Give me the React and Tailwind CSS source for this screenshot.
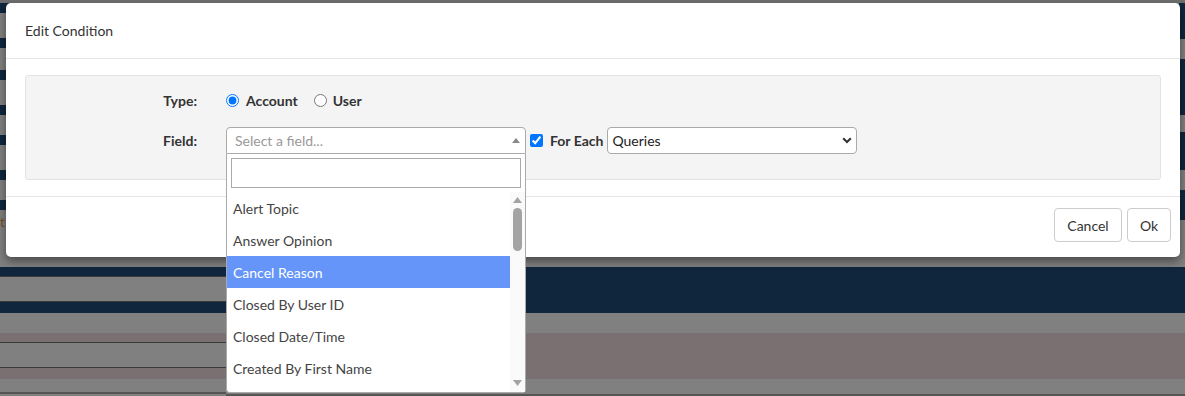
import React from 'react';

const leftTop = [
  ['#0f263d', 10], ['#808080', 25], ['#0f263d', 10], ['#808080', 22], ['#0f263d', 10], ['#808080', 25],
  ['#0f263d', 10], ['#808080', 20], ['#0f263d', 10], ['#808080', 25], ['#0f263d', 10], ['#808080', 20],
  ['#0f263d', 10],
];
const rightTop = [
  ['#0f263d', 36], ['#808080', 20], ['#0f263d', 56], ['#808080', 17], ['#0f263d', 38], ['#808080', 20],
  ['#0f263d', 30], ['#808080', 47],
];

const options = [
  'Alert Topic',
  'Answer Opinion',
  'Cancel Reason',
  'Closed By User ID',
  'Closed Date/Time',
  'Created By First Name',
];

const Stripes = ({ rows }) => (
  <div className="flex flex-col">
    {rows.map(([color, h], i) => (
      <div key={i} style={{ backgroundColor: color, height: h }} />
    ))}
  </div>
);

const FieldDropdown = () => (
  <div className="absolute left-[226px] top-[154px] w-[300px] h-[239px] bg-white border border-t-0 border-[#aaa] rounded-b-[4px] z-20 flex flex-col">
    <div className="px-[4px] pt-[4px] pb-[4px]">
      <div className="h-[30px] border border-[#aaa] bg-white" />
    </div>
    <div className="flex flex-1 overflow-hidden">
      {/* lista de opciones */}
      <div className="flex-1 overflow-hidden">
        {options.map((o, i) => (
          <div
            key={o}
            className={`h-[32px] flex items-center pl-[6px] text-[14px] ${
              i === 2 ? 'bg-[#6595f8] text-white' : 'text-[#444]'
            }`}
          >
            {o}
          </div>
        ))}
      </div>
      {/* barra de desplazamiento */}
      <div className="w-[15px] bg-[#fafafa] flex flex-col items-center">
        <svg width="9" height="6" viewBox="0 0 9 6" className="mt-[5px]">
          <path d="M4.5 0 L9 6 L0 6 Z" fill="#a3a3a3" />
        </svg>
        <div className="w-[9px] h-[43px] rounded-full bg-[#a3a3a3] mt-[5px]" />
        <div className="flex-1" />
        <svg width="9" height="6" viewBox="0 0 9 6" className="mb-[6px]">
          <path d="M0 0 L9 0 L4.5 6 Z" fill="#a3a3a3" />
        </svg>
      </div>
    </div>
  </div>
);

const EditConditionModal = () => (
  <div className="absolute left-[6px] top-[3px] w-[1174px] h-[254px] bg-white rounded-[5px] shadow-[0_4px_10px_rgba(0,0,0,0.45)] flex flex-col z-10">
    {/* Cabecera */}
    <div className="h-[56px] flex items-center px-[19px] border-b border-[#e5e5e5] text-[14px] text-[#333]">
      Edit Condition
    </div>

    {/* Cuerpo */}
    <div className="px-[19px] pt-[16px] pb-[16px]">
      <div className="h-[105px] bg-[#f4f4f4] border border-[#e3e3e3] rounded-[3px] pt-[13px]">
        <div className="flex items-center h-[22px]">
          <div className="w-[171px] text-right font-bold text-[14px] text-[#333]">Type:</div>
          <div className="ml-[29px] flex items-center text-[14px] font-bold text-[#333]">
            <input type="radio" name="type" defaultChecked className="w-[13px] h-[13px] m-0" />
            <span className="ml-[7px]">Account</span>
            <input type="radio" name="type" className="w-[13px] h-[13px] m-0 ml-[16px]" />
            <span className="ml-[6px]">User</span>
          </div>
        </div>

        <div className="flex items-center h-[27px] mt-[16px]">
          <div className="w-[171px] text-right font-bold text-[14px] text-[#333]">Field:</div>
          <div className="ml-[29px] w-[300px] h-[27px] bg-white border border-[#aaa] rounded-t-[4px] flex items-center pl-[8px] pr-[5px]">
            <span className="flex-1 text-[14px] text-[#999]">Select a field...</span>
            <svg width="8" height="5" viewBox="0 0 8 5">
              <path d="M4 0 L8 5 L0 5 Z" fill="#888" />
            </svg>
          </div>
          <input type="checkbox" defaultChecked className="w-[13px] h-[13px] m-0 ml-[4px]" />
          <span className="ml-[7px] font-bold text-[14px] text-[#333]">For Each</span>
          <div className="ml-[4px] w-[250px] h-[27px] bg-white border border-[#aaa] rounded-[4px] flex items-center pl-[4px] pr-[4px]">
            <span className="flex-1 text-[14px] text-[#222]">Queries</span>
            <svg width="10" height="7" viewBox="0 0 10 7">
              <path d="M1.2 1.2 L5 5 L8.8 1.2" fill="none" stroke="#333" strokeWidth="2" />
            </svg>
          </div>
        </div>
      </div>
    </div>

    {/* Pie */}
    <div className="border-t border-[#e5e5e5] flex justify-end gap-[5px] pt-[11px] pr-[9px]">
      <button className="h-[34px] w-[68px] border border-[#ccc] rounded-[4px] bg-white text-[14px] text-[#333]">
        Cancel
      </button>
      <button className="h-[34px] w-[44px] border border-[#ccc] rounded-[4px] bg-white text-[14px] text-[#333]">
        Ok
      </button>
    </div>
  </div>
);

const App = () => {
  return (
    <div className="relative w-[1185px] h-[396px] overflow-hidden bg-[#808080] font-['Lato','Liberation_Sans',sans-serif]">
      {/* Página de fondo (atenuada) */}
      <div className="h-[3px] bg-[#6f6f6f]" />
      <div className="flex h-[264px]">
        <div className="w-[226px] relative">
          <Stripes rows={leftTop} />
          <span className="absolute left-0 top-[210px] text-[13px] text-[#7a4a1e]">t</span>
        </div>
        <div className="flex-1 flex justify-end">
          <div className="w-[6px]">
            <Stripes rows={rightTop} />
          </div>
        </div>
      </div>
      <div className="flex">
        <div className="w-[226px] flex flex-col">
          <div className="h-[10px] bg-[#0f263d] border-b border-[#3a3a3a]" />
          <div className="h-[25px] bg-[#808080] border-b border-[#3a3a3a]" />
          <div className="h-[11px] bg-[#0f263d]" />
          <div className="h-[20px] bg-[#808080]" />
          <div className="h-[10px] bg-[#7b7071] border-b border-[#3a3a3a]" />
          <div className="h-[25px] bg-[#808080] border-b border-[#3a3a3a]" />
          <div className="h-[11px] bg-[#7b7071]" />
          <div className="h-[15px] bg-[#808080] border-b-2 border-[#555]" />
        </div>
        <div className="flex-1 flex flex-col">
          <div className="h-[46px] bg-[#0f263d]" />
          <div className="h-[20px] bg-[#808080]" />
          <div className="h-[46px] bg-[#7b7071]" />
          <div className="h-[17px] bg-[#808080] border-b-2 border-[#555]" />
        </div>
      </div>

      <EditConditionModal />
      <FieldDropdown />
    </div>
  );
};

export default App;
